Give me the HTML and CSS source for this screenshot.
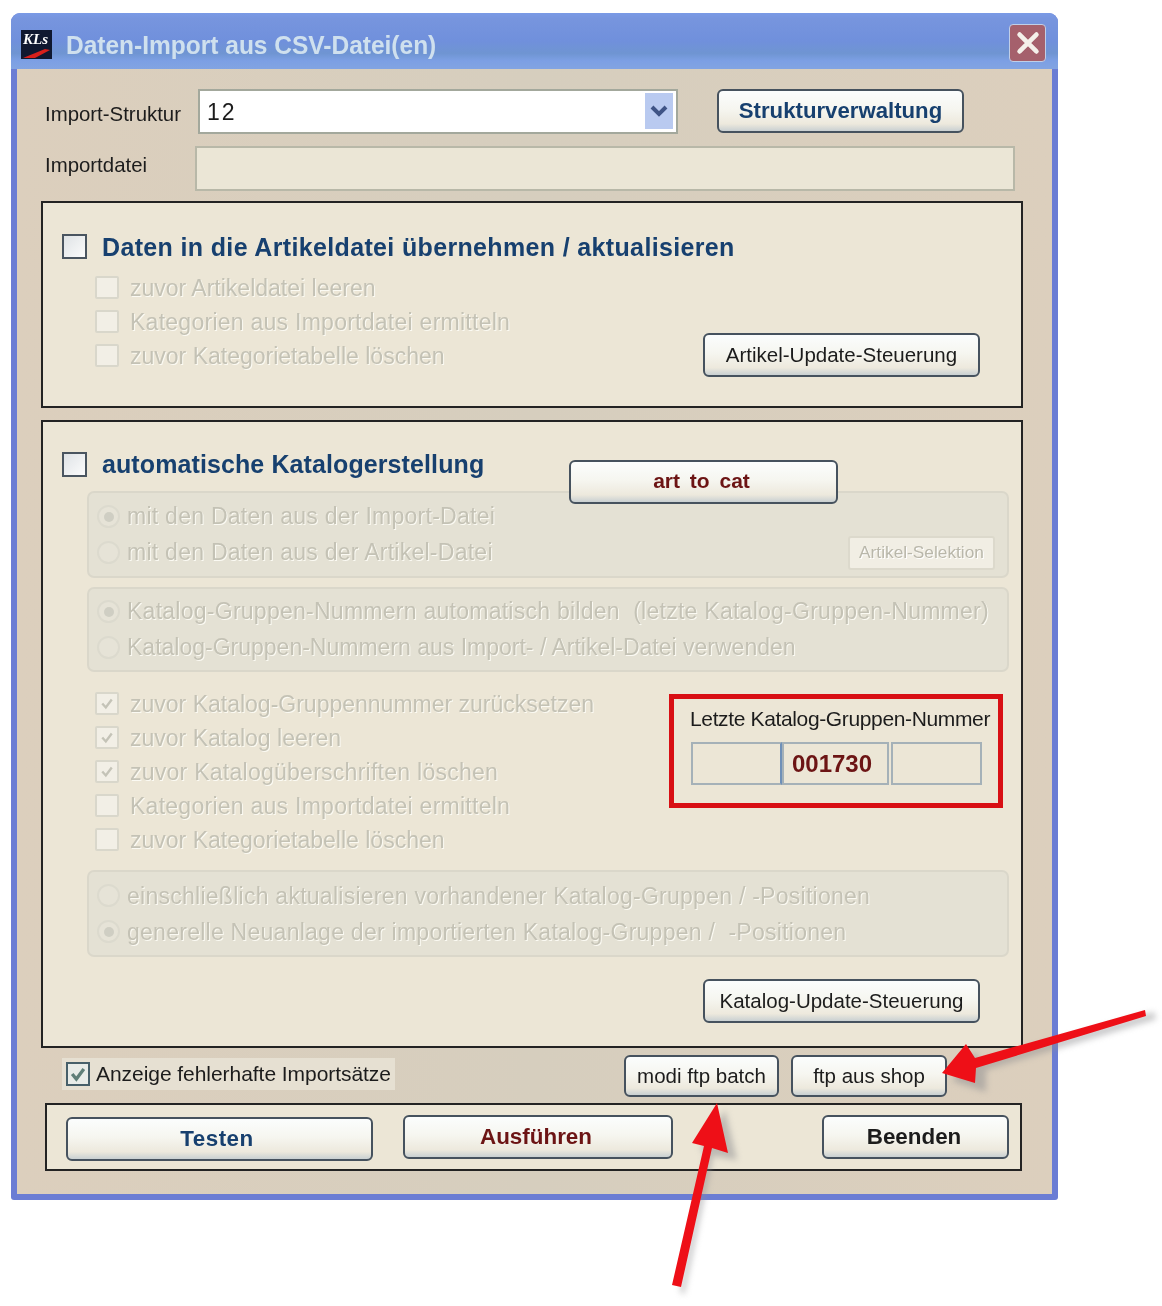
FILE: index.html
```html
<!DOCTYPE html>
<html lang="de">
<head>
<meta charset="utf-8">
<title>Daten-Import aus CSV-Datei(en)</title>
<link rel="stylesheet" href="styles.css">
</head>
<body>
<div class="page">
  <div class="window">
    <div class="titlebar">
      <div class="logo"><span class="logo-text">KLs</span><svg class="logo-swoosh" viewBox="0 0 31 11"><path d="M2 10 L24 1 L29 2 L14 10 Z" fill="#d8201c"/></svg></div>
      <div class="title">Daten-Import aus CSV-Datei(en)</div>
      <div class="close"><svg viewBox="0 0 38 38" width="32" height="32"><path d="M9 9 L29 29 M29 9 L9 29" stroke="#f4f0ea" stroke-width="5.5" stroke-linecap="round"/></svg></div>
    </div>
    <div class="client">
      <div class="row-struct">
        <div class="label label-struct">Import-Struktur</div>
        <div class="combo"><span class="combo-val">12</span><span class="combo-btn"><svg viewBox="0 0 20 14" width="20" height="14"><path d="M3 3 L10 10 L17 3" fill="none" stroke="#3f5486" stroke-width="4"/></svg></span></div>
        <button class="btn btn-struct navy">Strukturverwaltung</button>
      </div>
      <div class="row-file">
        <div class="label label-file">Importdatei</div>
        <div class="field"></div>
      </div>

      <section class="panel panel-one">
        <div class="heading"><span class="box-lg"></span><span class="heading-text h-wide">Daten in die Artikeldatei übernehmen / aktualisieren</span></div>
        <div class="split">
          <div class="checks">
            <div class="check-row"><span class="box"></span><span class="dis tight">zuvor Artikeldatei leeren</span></div>
            <div class="check-row"><span class="box"></span><span class="dis">Kategorien aus Importdatei ermitteln</span></div>
            <div class="check-row"><span class="box"></span><span class="dis tight">zuvor Kategorietabelle löschen</span></div>
          </div>
          <button class="btn btn-update">Artikel-Update-Steuerung</button>
        </div>
      </section>

      <section class="panel panel-two">
        <div class="heading"><span class="box-lg"></span><span class="heading-text">automatische Katalogerstellung</span></div>
        <button class="btn btn-cat maroon">art to cat</button>
        <div class="group group-first">
          <div class="radio-row"><span class="radio on"></span><span class="dis">mit den Daten aus der Import-Datei</span></div>
          <div class="radio-row"><span class="radio"></span><span class="dis">mit den Daten aus der Artikel-Datei</span><span class="mini-btn">Artikel-Selektion</span></div>
        </div>
        <div class="group group-second">
          <div class="radio-row"><span class="radio on"></span><span class="dis">Katalog-Gruppen-Nummern automatisch bilden  (letzte Katalog-Gruppen-Nummer)</span></div>
          <div class="radio-row"><span class="radio"></span><span class="dis tight">Katalog-Gruppen-Nummern aus Import- / Artikel-Datei verwenden</span></div>
        </div>
        <div class="middle">
          <div class="checks">
            <div class="check-row"><span class="box"><svg viewBox="0 0 24 24"><path d="M6 12 L10.5 17 L18 7" fill="none" stroke="#c4c3b7" stroke-width="3"/></svg></span><span class="dis tight">zuvor Katalog-Gruppennummer zurücksetzen</span></div>
            <div class="check-row"><span class="box"><svg viewBox="0 0 24 24"><path d="M6 12 L10.5 17 L18 7" fill="none" stroke="#c4c3b7" stroke-width="3"/></svg></span><span class="dis tight">zuvor Katalog leeren</span></div>
            <div class="check-row"><span class="box"><svg viewBox="0 0 24 24"><path d="M6 12 L10.5 17 L18 7" fill="none" stroke="#c4c3b7" stroke-width="3"/></svg></span><span class="dis">zuvor Katalogüberschriften löschen</span></div>
            <div class="check-row"><span class="box"></span><span class="dis">Kategorien aus Importdatei ermitteln</span></div>
            <div class="check-row"><span class="box"></span><span class="dis tight">zuvor Kategorietabelle löschen</span></div>
          </div>
          <div class="redbox">
            <div class="red-label">Letzte Katalog-Gruppen-Nummer</div>
            <div class="cells">
              <div class="cell c-a"></div>
              <div class="cell c-b">001730</div>
              <div class="cell c-c"></div>
            </div>
          </div>
        </div>
        <div class="group group-third">
          <div class="radio-row"><span class="radio"></span><span class="dis">einschließlich aktualisieren vorhandener Katalog-Gruppen / -Positionen</span></div>
          <div class="radio-row"><span class="radio on"></span><span class="dis">generelle Neuanlage der importierten Katalog-Gruppen /  -Positionen</span></div>
        </div>
        <div class="end-row"><button class="btn btn-update">Katalog-Update-Steuerung</button></div>
      </section>

      <div class="row-extra">
        <div class="err-check">
          <span class="box-on"><svg viewBox="0 0 24 24"><path d="M5 12 L10 18 L19 6" fill="none" stroke="#5f7f78" stroke-width="4"/></svg></span>
          <span class="err-text">Anzeige fehlerhafte Importsätze</span>
        </div>
        <button class="btn btn-modi">modi ftp batch</button>
        <button class="btn btn-ftp">ftp aus shop</button>
      </div>

      <div class="panel-actions">
        <button class="btn act act-test navy">Testen</button>
        <button class="btn act act-run maroon">Ausführen</button>
        <button class="btn act act-end">Beenden</button>
      </div>
    </div>
  </div>

  <svg class="arrows" viewBox="0 0 1162 1306" width="1162" height="1306">
    <g class="arrow-shadow">
      <path d="M1156 1019 L986 1070 L986 1092 L952 1081 L975 1051 L980 1062 L1154 1012 Z"/>
      <path d="M684 1295 L713 1156 L737 1160 L725 1110 L700 1150 L706 1152 L680 1291 Z"/>
    </g>
    <path class="arrow" d="M1145 1010 L975 1058 L966 1044 L942 1073 L975 1083 L976 1068 L1146 1016 Z"/>
    <path class="arrow" d="M672 1285 L681 1287 L712 1148 L728 1153 L717 1103 L692 1143 L704 1146 Z"/>
  </svg>
</div>
</body>
</html>
```
FILE: styles.css
```css
html, body { margin: 0; padding: 0; background: #fff; }
body { font-family: "Liberation Sans", Arial, sans-serif; color: #1c1c1c; }
.page { position: relative; width: 1162px; height: 1306px; overflow: hidden; box-sizing: border-box; padding: 13px 0 0 11px; }
.window { width: 1047px; height: 1187px; border-radius: 9px 9px 3px 3px; overflow: hidden; background: #6b7dd4; filter: blur(0.55px); display: flex; flex-direction: column; }

.titlebar { height: 56px; flex: none; display: flex; align-items: center; box-sizing: border-box; padding: 5px 12px 0 10px; background: linear-gradient(#7a9ae6 0, #7795de 10%, #7090dc 50%, #6f95d2 72%, #7c9fe4 85%, #82a4e2 100%); }
.logo { position: relative; width: 31px; height: 29px; background: #101830; margin-top: 1px; overflow: hidden; flex: none; }
.logo-text { display: block; font: italic bold 15px/18px "Liberation Serif", serif; color: #fff; padding-left: 2px; }
.logo-swoosh { position: absolute; left: 0; bottom: 0; width: 31px; height: 11px; }
.title { margin-left: 14px; padding-top: 3px; font-size: 25px; font-weight: bold; color: #cfe0ee; transform: scaleX(0.98); transform-origin: left center; white-space: nowrap; flex: 1; }
.close { width: 37px; height: 38px; box-sizing: border-box; border: 1px solid #c0cfe8; border-radius: 4px; background: #a5606c; display: flex; align-items: center; justify-content: center; margin-top: -1px; }

.client { flex: 1; margin: 0 6px 6px; box-sizing: border-box; padding-top: 19px; background: #dacfbe; background-image: linear-gradient(90deg, #dccfbd, #d6cebe 50%, #dccfbd); }
.row-struct { display: flex; align-items: center; height: 46px; padding-left: 28px; }
.label { font-size: 20.4px; flex: none; }
.label-struct { width: 153px; padding-top: 6px; box-sizing: border-box; }
.combo { width: 480px; height: 45px; flex: none; box-sizing: border-box; border: 2px solid #a3a89c; background: #fff; display: flex; align-items: center; justify-content: space-between; padding: 2px 3px 2px 7px; }
.combo-val { font-size: 23px; letter-spacing: 2px; padding-top: 2px; }
.combo-btn { width: 28px; height: 36px; background: #b9caf0; display: flex; align-items: center; justify-content: center; }
.btn { font-family: inherit; box-sizing: border-box; border: 2px solid #46525e; border-radius: 6px; background: linear-gradient(#fbfdfd 0, #f6f6f0 45%, #ede9dd 82%, #c9d0d2 100%); color: #1c1c1c; font-size: 20.5px; padding: 0; flex: none; white-space: nowrap; }
.navy { color: #17406f; font-weight: bold; }
.maroon { color: #6c1414; font-weight: bold; }
.btn-struct { width: 247px; height: 44px; margin-left: 39px; font-size: 22.2px; }
.row-file { display: flex; align-items: center; margin-top: 12px; height: 45px; padding-left: 28px; }
.label-file { width: 150px; padding-bottom: 6px; box-sizing: border-box; }
.field { width: 820px; height: 45px; box-sizing: border-box; border: 2px solid #b8b8a8; background: #ebe6d6; }

.panel { width: 982px; margin-left: 24px; box-sizing: border-box; border: 2px solid #232323; background: #ece6d6; position: relative; }
.panel-one { height: 207px; margin-top: 10px; padding-top: 31px; }
.panel-two { height: 628px; margin-top: 12px; padding-top: 30px; }
.heading { display: flex; align-items: center; height: 25px; padding-left: 19px; }
.box-lg { width: 25px; height: 25px; box-sizing: border-box; flex: none; border: 2px solid #4a5560; background: linear-gradient(135deg, #dfe3e6, #fbfbfb); }
.heading-text { margin-left: 15px; font-size: 25px; font-weight: bold; color: #17406f; white-space: nowrap; letter-spacing: 0.1px; }
.h-wide { letter-spacing: 0.35px; padding-top: 2px; }
.split { display: flex; justify-content: space-between; align-items: flex-end; margin-top: 17px; padding: 0 41px 0 52px; }
.checks { display: flex; flex-direction: column; gap: 11px; }
.split .checks { margin-bottom: 10px; }
.check-row { display: flex; align-items: center; height: 23px; }
.box { width: 24px; height: 23px; box-sizing: border-box; flex: none; border: 2px solid #d9d7cb; border-radius: 2px; background: #f2efe6; margin-right: 11px; }
.box svg { display: block; width: 20px; height: 19px; }
.dis { color: #c4c2b5; font-size: 23px; text-shadow: 1px 1px 0 #fbfaf3; white-space: pre; letter-spacing: 0.26px; padding-top: 1px; }
.tight { letter-spacing: 0; }
.group-first .dis, .group-second .dis { padding-top: 0; }
.btn-update { width: 277px; height: 44px; }

.btn-cat { position: absolute; left: 526px; top: 38px; width: 269px; height: 44px; font-size: 21px; z-index: 1; word-spacing: 4px; padding-right: 4px; padding-bottom: 2px; }
.group { width: 922px; margin-left: 44px; box-sizing: border-box; border: 2px solid #dad7ca; border-radius: 7px; background: #e4e1d4; padding-left: 8px; display: flex; flex-direction: column; justify-content: center; gap: 10px; }
.group-first { height: 87px; margin-top: 14px; }
.group-second { height: 85px; margin-top: 9px; }
.group-third { height: 87px; margin-top: 19px; }
.radio-row { display: flex; align-items: center; height: 26px; position: relative; }
.radio { width: 23px; height: 23px; box-sizing: border-box; flex: none; border: 2px solid #dcdace; border-radius: 50%; margin-right: 7px; background: #e6e3d7; display: flex; align-items: center; justify-content: center; }
.radio.on::after { content: ""; width: 10px; height: 10px; border-radius: 50%; background: #cfcec3; }
.mini-btn { margin-left: auto; margin-right: 12px; width: 147px; height: 34px; box-sizing: border-box; border: 2px solid #dcd9cc; border-radius: 3px; background: #f1eee4; color: #b9b7aa; font-size: 17.3px; line-height: 28px; text-align: center; text-shadow: 1px 1px 0 #fff; white-space: nowrap; }
.middle { display: flex; justify-content: space-between; align-items: flex-start; padding: 20px 18px 0 52px; }
.redbox { width: 334px; height: 114px; margin-top: 2px; box-sizing: border-box; border: 5px solid #d80f14; padding: 4px 0 0 16px; }
.red-label { font-size: 21px; line-height: 32px; white-space: nowrap; letter-spacing: -0.36px; }
.cells { display: flex; margin-top: 7px; height: 43px; }
.cell { box-sizing: border-box; border: 2px solid #a5b1b8; height: 43px; color: #6c1414; font-weight: bold; font-size: 24px; line-height: 39px; text-align: center; }
.c-a { width: 91px; border-right-color: #6f90b8; margin-left: 1px; }
.c-b { width: 107px; padding-right: 7px; }
.c-c { width: 91px; margin-left: 2px; }
.end-row { display: flex; justify-content: flex-end; padding-right: 41px; margin-top: 22px; }

.row-extra { display: flex; align-items: flex-start; height: 55px; padding: 7px 0 0 45px; box-sizing: border-box; }
.err-check { width: 333px; height: 32px; margin-top: 3px; background: #e6e0d2; display: flex; align-items: center; padding-left: 4px; box-sizing: border-box; flex: none; }
.box-on { width: 24px; height: 24px; box-sizing: border-box; border: 2px solid #47606a; background: #e8ece8; flex: none; margin-right: 6px; }
.box-on svg { display: block; width: 20px; height: 20px; }
.err-text { font-size: 21px; white-space: nowrap; letter-spacing: -0.05px; }
.btn-modi { width: 155px; height: 42px; margin-left: 229px; }
.btn-ftp { width: 156px; height: 42px; margin-left: 12px; }
.panel-actions { width: 977px; height: 68px; margin-left: 28px; box-sizing: border-box; border: 2px solid #232323; background: #ece6d6; display: flex; align-items: flex-start; padding: 10px 11px 0 19px; }
.act { height: 44px; font-size: 22.4px; font-weight: bold; }
.act-test { width: 307px; margin-top: 2px; padding-right: 5px; letter-spacing: 0.5px; }
.act-run { width: 270px; margin-left: 30px; padding-right: 4px; }
.act-end { width: 187px; margin-left: auto; color: #1c1c1c; padding-right: 3px; }

.arrows { position: absolute; left: 0; top: 0; pointer-events: none; }
.arrow { fill: #ee0f17; }
.arrow-shadow { fill: #8d8d90; opacity: 0.5; filter: blur(3px); }
```
